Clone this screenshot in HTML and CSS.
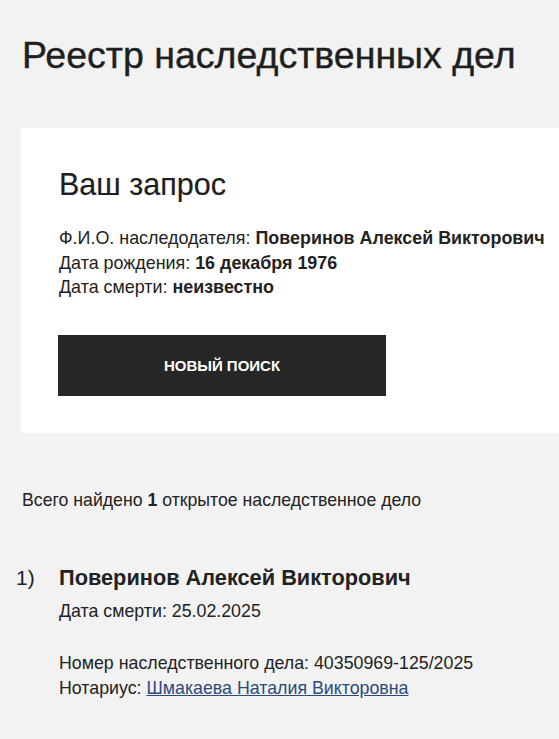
FILE: index.html
```html
<!DOCTYPE html>
<html lang="ru">
<head>
<meta charset="utf-8">
<link rel="stylesheet" href="styles.css">
</head>
<body>
<div class="page">
  <h1 class="title">Реестр наследственных дел</h1>
  <section class="card">
    <h2 class="card-title">Ваш запрос</h2>
    <div class="query">
      <p>Ф.И.О. наследодателя: <b>Поверинов Алексей Викторович</b></p>
      <p>Дата рождения: <b>16 декабря 1976</b></p>
      <p>Дата смерти: <b>неизвестно</b></p>
    </div>
    <button class="btn">НОВЫЙ ПОИСК</button>
  </section>
  <p class="total">Всего найдено <b>1</b> открытое наследственное дело</p>
  <ol class="results">
    <li class="result">
      <span class="num">1)</span>
      <div class="result-body">
        <h3 class="result-name">Поверинов Алексей Викторович</h3>
        <p class="death">Дата смерти: 25.02.2025</p>
        <p>Номер наследственного дела: 40350969-125/2025</p>
        <p>Нотариус: <a href="#" class="link">Шмакаева Наталия Викторовна</a></p>
      </div>
    </li>
  </ol>
</div>
</body>
</html>
```

FILE: styles.css
```css
* { box-sizing: border-box; }
html, body {
  margin: 0;
  padding: 0;
  background: #f2f2f2;
  color: #222;
  font-family: "Liberation Sans", Arial, sans-serif;
  overflow: hidden;
}
.page {
  padding: 0 0 0 21px;
}
p { margin: 0; }
.title {
  margin: 0;
  padding: 33px 0 0 1px;
  font-size: 37.5px;
  font-weight: 400;
  line-height: 44px;
  height: 128px;
  color: #1f1f1f;
  -webkit-text-stroke: 0.4px #1f1f1f;
}
.card {
  background: #fff;
  padding: 38px 0 37px 38px;
  margin-right: -10px;
}
.card-title {
  margin: 0 0 24px;
  font-size: 30.5px;
  font-weight: 400;
  line-height: 36px;
  color: #1f1f1f;
  -webkit-text-stroke: 0.2px #1f1f1f;
}
.query p {
  font-size: 17.9px;
  line-height: 24.5px;
}
.btn {
  margin-top: 35.5px;
  width: 328px;
  height: 61px;
  border: 0;
  background: #262626;
  color: #fff;
  font-family: "Liberation Sans", Arial, sans-serif;
  font-weight: 700;
  font-size: 15px;
  display: block;
  margin-left: -1px;
}
.total {
  font-size: 17.7px;
  line-height: 24px;
  margin: 55px 0 0 1px;
}
.results {
  list-style: none;
  margin: 52px 0 0;
  padding: 0;
}
.result {
  display: flex;
}
.num {
  font-size: 21px;
  line-height: 28px;
  width: 38px;
  margin-left: -5px;
  margin-right: 5px;
}
.result-name {
  margin: 0 0 6.5px;
  font-size: 21.75px;
  font-weight: 700;
  line-height: 28px;
}
.result-body p {
  font-size: 17.8px;
  line-height: 25px;
}
.result-body .death { margin-bottom: 27px; }
.link {
  color: #2b4a7d;
  text-decoration: underline;
}
```
